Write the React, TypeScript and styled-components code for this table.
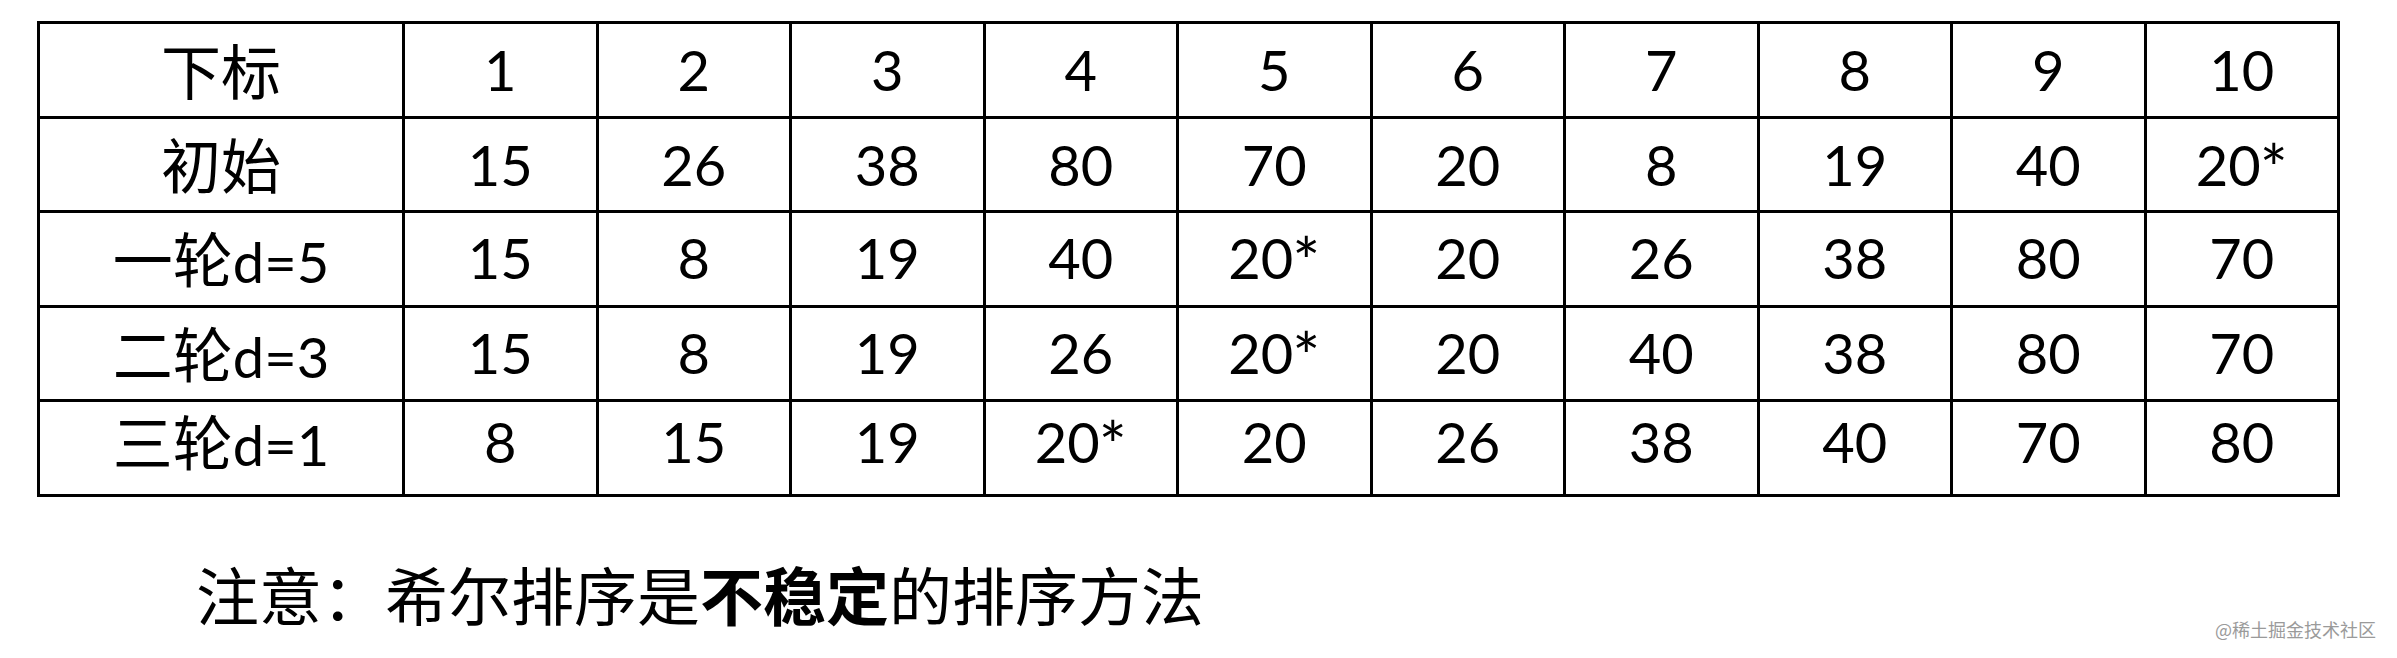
import styled, { createGlobalStyle } from 'styled-components';

const GlobalStyle = createGlobalStyle`
    html, body {
        margin: 0;
        padding: 0;
        background: #fff;
    }
`;

const Page = styled.div`
    width: 2397px;
    height: 658px;
    box-sizing: border-box;
    padding: 21px 21px 0 37px;
    display: flex;
    flex-direction: column;
    overflow: hidden;
    font-family: Lato, "Noto Sans CJK SC", sans-serif;
    color: #000;
`;

const Table = styled.div`
    width: 2303px;
    height: 476px;
    box-sizing: border-box;
    padding: 3px;
    display: grid;
    grid-template-columns: 362px repeat(10, 1fr);
    grid-template-rows: repeat(5, 1fr);
    gap: 3px;
    background: #000;
`;

const Cell = styled.div<{ $shift: number }>`
    background: #fff;
    display: flex;
    align-items: center;
    justify-content: center;
    font-size: 56px;
    line-height: 1.2;
    white-space: nowrap;
    span.inner {
        position: relative;
        top: ${p => p.$shift}px;
    }
`;

const Han = styled.span`
    font-family: "Noto Sans CJK SC", sans-serif;
    font-size: 60px;
    font-weight: 400;
`;

// Calibri's asterisk is larger than Lato's, and sits level with the digit tops
const Star = styled.span`
    position: relative;
    top: 7px;
    font-size: 66px;
    line-height: 0;
    margin-left: -1px;
`;

const Footer = styled.div`
    margin-top: 64px;
    display: flex;
    justify-content: space-between;
    align-items: flex-end;
`;

const Note = styled.div`
    padding-left: 159px;
    font-family: "Noto Sans CJK SC", sans-serif;
    font-size: 63px;
    line-height: 63px;
    white-space: nowrap;
    b {
        font-weight: 700;
    }
`;

const Watermark = styled.div`
    margin-bottom: -14px;
    font-family: "Noto Sans CJK SC", sans-serif;
    font-size: 18px;
    line-height: 18px;
    color: #9a9a9a;
    white-space: nowrap;
`;

type Row = { han: string; latin?: string; shift: number; values: string[] };

const rows: Row[] = [
    { han: '下标', shift: 0, values: ['1', '2', '3', '4', '5', '6', '7', '8', '9', '10'] },
    { han: '初始', shift: 0, values: ['15', '26', '38', '80', '70', '20', '8', '19', '40', '20*'] },
    { han: '一轮', latin: 'd=5', shift: -1, values: ['15', '8', '19', '40', '20*', '20', '26', '38', '80', '70'] },
    { han: '二轮', latin: 'd=3', shift: -1, values: ['15', '8', '19', '26', '20*', '20', '40', '38', '80', '70'] },
    { han: '三轮', latin: 'd=1', shift: -7, values: ['8', '15', '19', '20*', '20', '26', '38', '40', '70', '80'] },
];

const Value = ({ v }: { v: string }) => v.endsWith('*')
    ? <>{v.slice(0, -1)}<Star>*</Star></>
    : <>{v}</>;

export default function App() {
    return <>
        <GlobalStyle />
        <Page>
            <Table>
                {rows.map(row => [
                    <Cell key={row.han} $shift={row.shift}>
                        <span className="inner"><Han>{row.han}</Han>{row.latin}</span>
                    </Cell>,
                    ...row.values.map((v, i) => <Cell key={row.han + i} $shift={row.shift}>
                        <span className="inner"><Value v={v} /></span>
                    </Cell>),
                ])}
            </Table>
            <Footer>
                <Note>注意：希尔排序是<b>不稳定</b>的排序方法</Note>
                <Watermark>@稀土掘金技术社区</Watermark>
            </Footer>
        </Page>
    </>;
}
